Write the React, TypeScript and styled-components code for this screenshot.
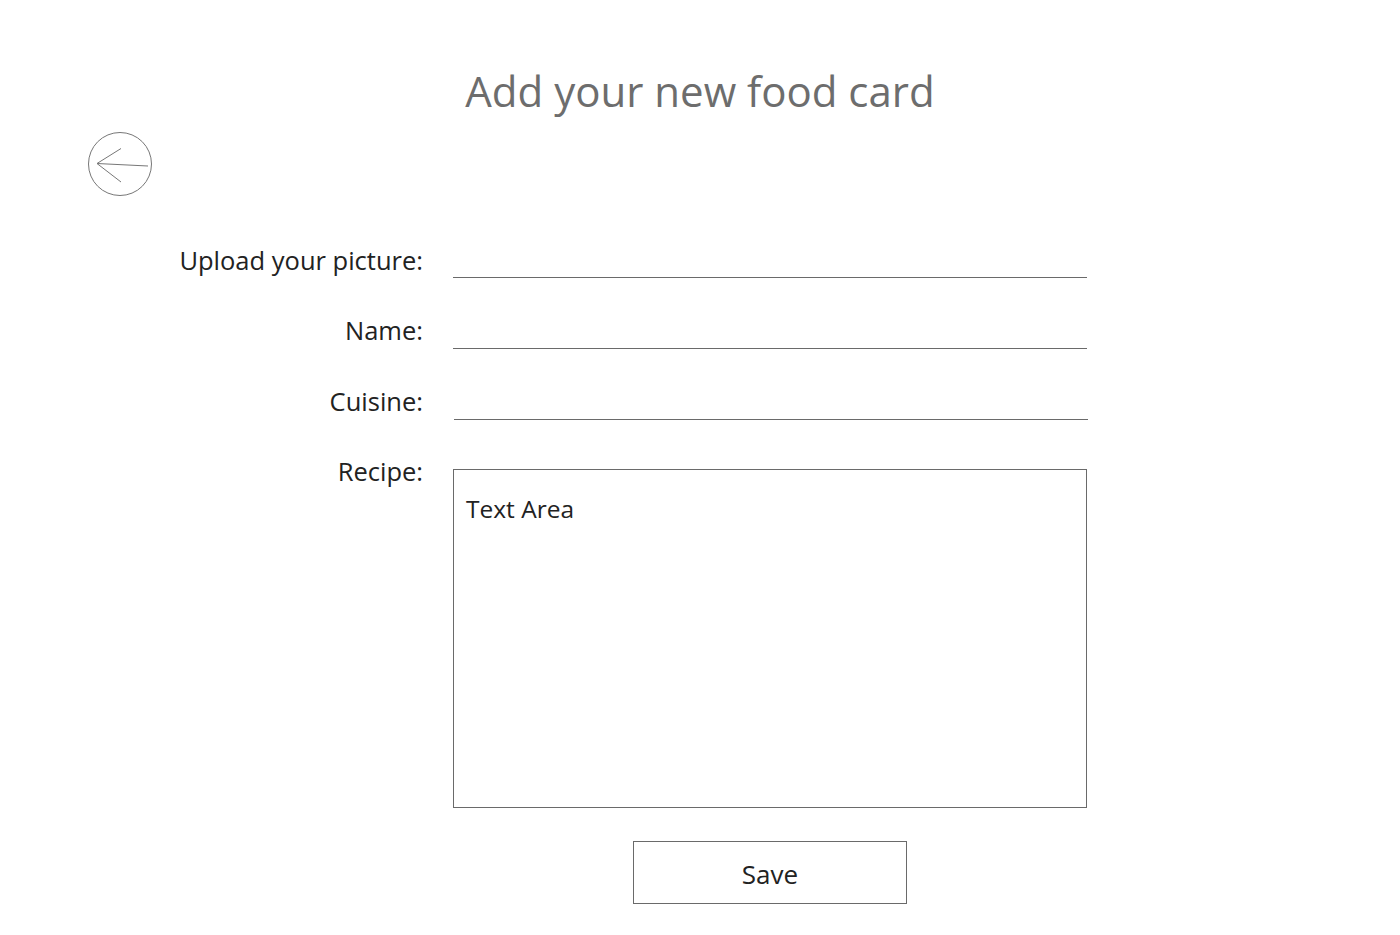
import React from "react";
import styled, { createGlobalStyle } from "styled-components";

const Global = createGlobalStyle`
  html, body { margin: 0; padding: 0; background: #fff; }
  body { font-family: "Open Sans", "Noto Sans", sans-serif; }
`;

const Page = styled.div`
  width: 1400px;
  height: 935px;
  position: relative;
  display: flex;
  flex-direction: column;
  box-sizing: border-box;
  padding-top: 63px;
`;

const Title = styled.h1`
  margin: 0;
  text-align: center;
  font-weight: 400;
  font-size: 42px;
  line-height: 56px;
  color: #6d6d6d;
`;

const BackButton = styled.button`
  position: absolute;
  left: 88px;
  top: 131px;
  width: 65px;
  height: 65px;
  padding: 0;
  border: none;
  background: transparent;
  cursor: pointer;
`;

const Form = styled.div`
  display: grid;
  grid-template-columns: 423px 634px;
  column-gap: 30px;
  row-gap: 0;
  margin-top: 123px;
`;

const Label = styled.div<{ $h: number; $pad?: number }>`
  height: ${(p) => p.$h}px;
  box-sizing: border-box;
  padding-top: ${(p) => p.$pad ?? 1}px;
  text-align: right;
  font-size: 25.5px;
  line-height: 32px;
  color: #222;
`;

const LineInput = styled.div<{ $shift?: number }>`
  height: 71px;
  position: relative;
  &::after {
    content: "";
    position: absolute;
    left: ${(p) => p.$shift ?? 0}px;
    right: ${(p) => -(p.$shift ?? 0)}px;
    top: 35px;
    height: 1px;
    background: #6a6a6a;
  }
`;

const TextArea = styled.div`
  height: 339px;
  box-sizing: border-box;
  border: 1px solid #6a6a6a;
  margin-top: 14px;
  padding: 22px 12px;
  font-size: 24.5px;
  line-height: 34px;
  color: #222;
`;

const ButtonRow = styled.div`
  grid-column: 2;
  display: flex;
  justify-content: center;
  padding-top: 33px;
`;

const SaveButton = styled.button`
  width: 274px;
  height: 63px;
  box-sizing: border-box;
  border: 1px solid #6a6a6a;
  background: #fff;
  font-family: inherit;
  font-size: 26px;
  color: #222;
  padding: 2px 0 0;
`;

export default function App() {
  return (
    <>
      <Global />
      <Page>
        <Title>Add your new food card</Title>
        <BackButton aria-label="Back">
          <svg width="65" height="65" viewBox="0 0 65 65">
            <circle cx="32" cy="33" r="31.5" fill="none" stroke="#777" strokeWidth="1" />
            <path d="M9 32.5 L60 35 M9 32.5 L33 17.5 M9 32.5 L33 51" fill="none" stroke="#777" strokeWidth="1" />
          </svg>
        </BackButton>
        <Form>
          <Label $h={71} $pad={2}>Upload your picture:</Label>
          <LineInput />
          <Label $h={71}>Name:</Label>
          <LineInput />
          <Label $h={71}>Cuisine:</Label>
          <LineInput $shift={1} />
          <Label $h={339} $pad={0}>Recipe:</Label>
          <TextArea>Text Area</TextArea>
          <ButtonRow>
            <SaveButton>Save</SaveButton>
          </ButtonRow>
        </Form>
      </Page>
    </>
  );
}
